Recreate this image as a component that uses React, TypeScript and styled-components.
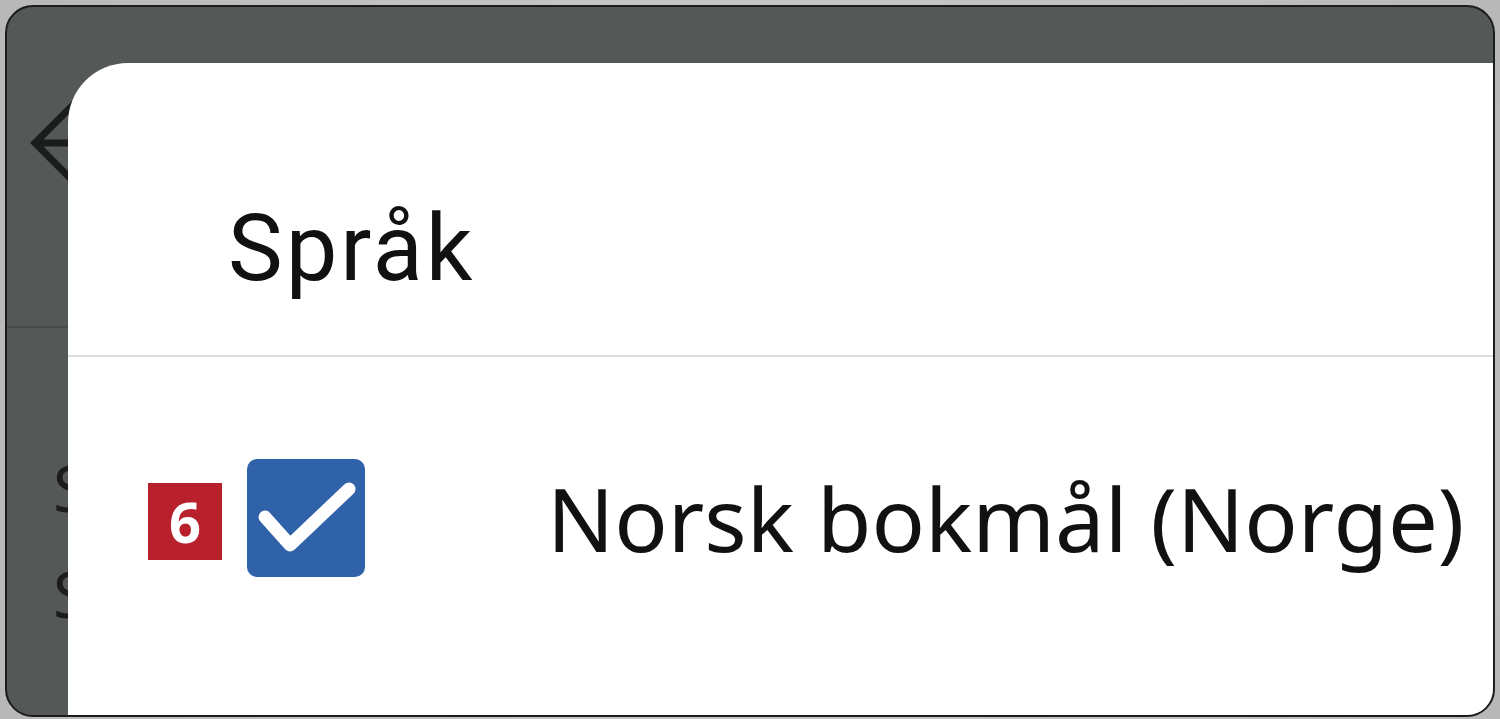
import styled, {createGlobalStyle} from "styled-components";

const GlobalStyle = createGlobalStyle`
  html, body {
    margin: 0;
    padding: 0;
    background: #c2c2c2;
    overflow: hidden;
  }
`;

const Screen = styled.div`
  width: 1500px;
  height: 719px;
  padding: 5px 5px 2px 5px;
  box-sizing: border-box;
  background: radial-gradient(circle at 50% 50%, #cfcfcf, #b8b8b8);
`;

const DeviceFrame = styled.div`
  position: relative;
  height: 100%;
  border: 2px solid #1c1c1c;
  border-radius: 28px;
  background: #545857;
  overflow: hidden;
  box-sizing: border-box;
  display: flex;
  flex-direction: column;
  padding: 56px 0 0 61px;
`;

// the dimmed page under the sheet
const BackdropPage = styled.div`
  position: absolute;
  inset: 0;
  display: flex;
  flex-direction: column;
  pointer-events: none;
`;

const BackdropHeader = styled.div`
  height: 321px;
  border-bottom: 2px solid #474b4a;
  display: flex;
  align-items: flex-start;
  padding: 86px 0 0 20px;
  box-sizing: border-box;
`;

const BackdropList = styled.div`
  display: flex;
  flex-direction: column;
  gap: 42px;
  padding: 128px 0 0 46px;
  font-family: "Noto Sans", sans-serif;
  font-size: 64px;
  line-height: 64px;
  color: #1c1c1c;
`;

const Sheet = styled.div`
  position: relative;
  flex: 1;
  background: #ffffff;
  border-top-left-radius: 60px;
  display: flex;
  flex-direction: column;
`;

const SheetHeader = styled.div`
  height: 294px;
  display: flex;
  align-items: flex-start;
  padding: 140px 0 0 160px;
  box-sizing: border-box;
  border-bottom: 2px solid #dcdcda;
`;

const Title = styled.h1`
  margin: 0;
  font-family: Roboto, "Noto Sans", sans-serif;
  font-weight: 400;
  font-size: 92px;
  line-height: 92px;
  color: #111111;
  letter-spacing: 3px;
`;

const OptionRow = styled.div`
  display: flex;
  align-items: center;
  height: 316px;
  padding: 5px 0 0 80px;
  box-sizing: border-box;
`;

const NumberBadge = styled.span`
  width: 74px;
  height: 77px;
  margin: 8px 25px 0 0;
  background: #b8202c;
  color: #ffffff;
  font-family: "Noto Sans", sans-serif;
  font-weight: 700;
  font-size: 56px;
  line-height: 77px;
  text-align: center;
`;

const CheckBox = styled.span<{ $checked: boolean }>`
  width: 118px;
  height: 118px;
  border-radius: 10px;
  background: ${p => (p.$checked ? "#2f62a8" : "#ffffff")};
  display: inline-flex;
  align-items: center;
  justify-content: center;
  margin-right: 182px;
`;

const OptionLabel = styled.span`
  font-family: "Noto Sans", sans-serif;
  font-size: 88.5px;
  line-height: 100px;
  color: #111111;
  white-space: nowrap;
`;

const BackArrow = () => (
    <svg width="90" height="90" viewBox="0 0 90 90">
        <path d="M50 8 L8 50 L50 92 M8 50 L90 50" fill="none" stroke="#1b1d1d" strokeWidth="7"/>
    </svg>
);

const Check = () => (
    <svg width="118" height="118" viewBox="0 0 118 118">
        <polyline points="18,58 43,86 102,30" fill="none" stroke="#ffffff" strokeWidth="13"
                  strokeLinecap="round" strokeLinejoin="round"/>
    </svg>
);

const App = () => {
    return (
        <Screen>
            <GlobalStyle/>
            <DeviceFrame>
                <BackdropPage>
                    <BackdropHeader>
                        <BackArrow/>
                    </BackdropHeader>
                    <BackdropList>
                        <span>S</span>
                        <span>S</span>
                    </BackdropList>
                </BackdropPage>
                <Sheet>
                    <SheetHeader>
                        <Title>Språk</Title>
                    </SheetHeader>
                    <OptionRow>
                        <NumberBadge>6</NumberBadge>
                        <CheckBox $checked={true}>
                            <Check/>
                        </CheckBox>
                        <OptionLabel>Norsk bokmål (Norge)</OptionLabel>
                    </OptionRow>
                </Sheet>
            </DeviceFrame>
        </Screen>
    );
};

export default App;
